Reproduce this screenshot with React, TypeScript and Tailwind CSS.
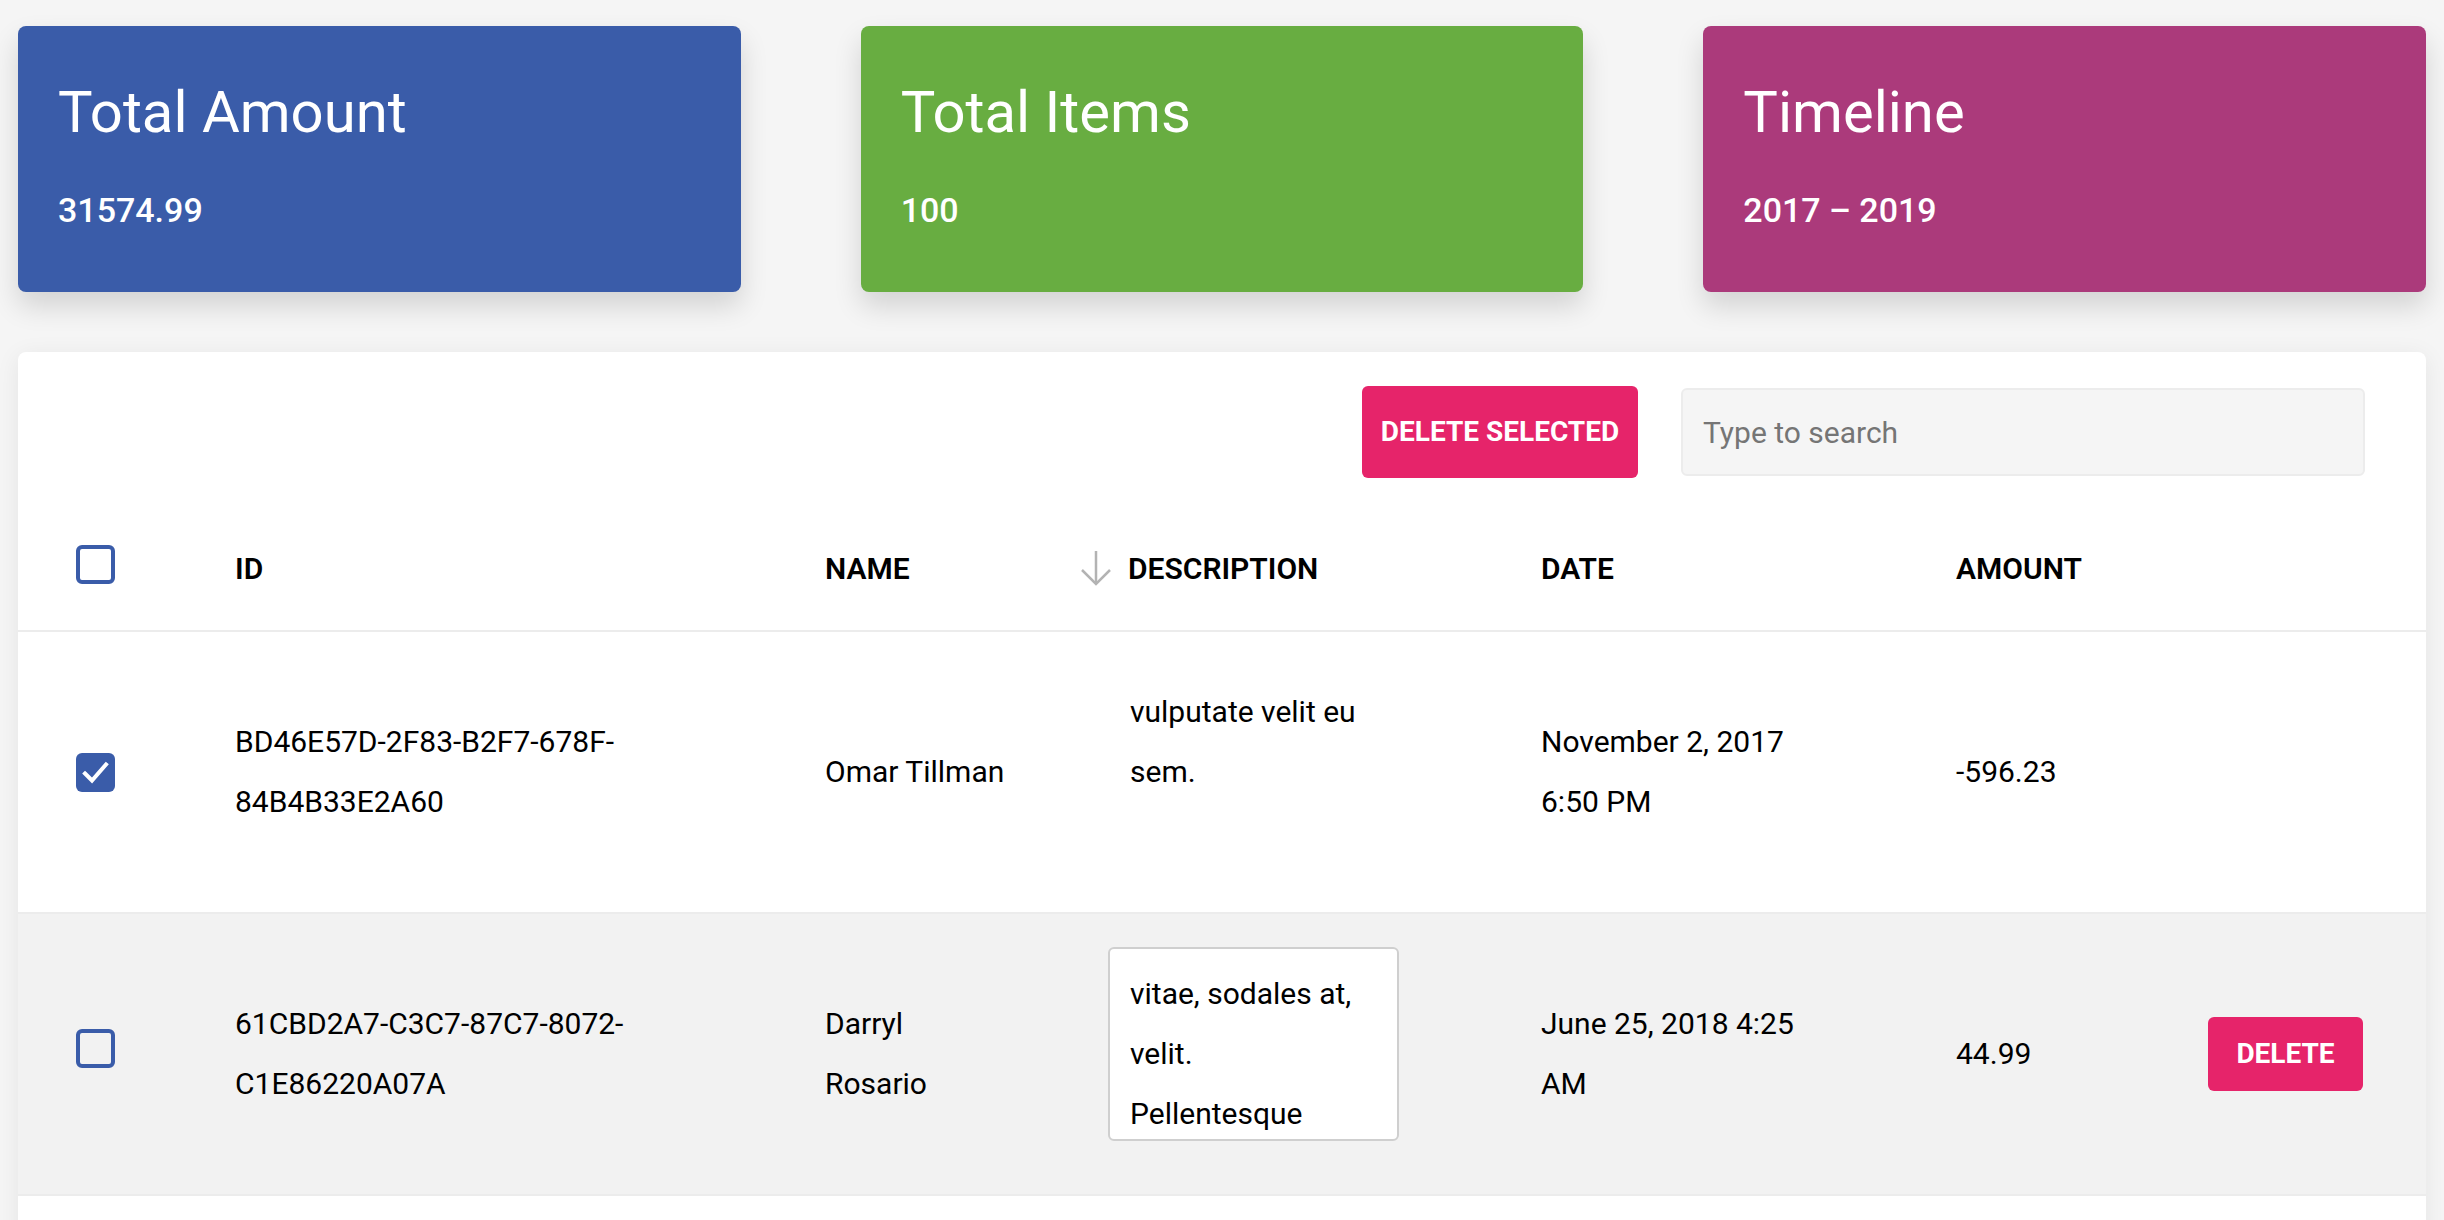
import { useState } from 'react';

interface Row {
  id: string[];
  name: string;
  description: string;
  date: string;
  amount: string;
}

const STATS = [
  { title: 'Total Amount', value: '31574.99', bg: 'bg-[#3a5ca9]' },
  { title: 'Total Items', value: '100', bg: 'bg-[#68ad41]' },
  { title: 'Timeline', value: '2017 – 2019', bg: 'bg-[#ab3a7b]' },
];

const ROWS: Row[] = [
  {
    id: ['BD46E57D-2F83-B2F7-678F-', '84B4B33E2A60'],
    name: 'Omar Tillman',
    description: 'vulputate velit eu sem.',
    date: 'November 2, 2017 6:50 PM',
    amount: '-596.23',
  },
  {
    id: ['61CBD2A7-C3C7-87C7-8072-', 'C1E86220A07A'],
    name: 'Darryl Rosario',
    description: 'vitae, sodales at, velit. Pellentesque ultricies dignissim lacus.',
    date: 'June 25, 2018 4:25 AM',
    amount: '44.99',
  },
];

const COLS = 'grid grid-cols-[159px_590px_283px_433px_415px_252px_155px] pl-[58px] pr-[63px]';

function Checkbox({ checked, onChange }: { checked: boolean; onChange: () => void }) {
  return (
    <button
      onClick={onChange}
      className={
        checked
          ? 'w-[39px] h-[39px] rounded-[6px] bg-[#3a5ca9] flex items-center justify-center'
          : 'w-[39px] h-[39px] rounded-[6px] border-[4px] border-[#3a5ca9] bg-transparent'
      }
    >
      {checked && (
        <svg width="39" height="39" viewBox="0 0 39 39" fill="none">
          <path d="M9 20.5 L16 27.5 L30 11.5" stroke="#fff" strokeWidth="4" strokeLinecap="square" />
        </svg>
      )}
    </button>
  );
}

function SortArrow() {
  return (
    <svg width="32" height="36" viewBox="0 0 32 36" fill="none">
      <path d="M16 1 V34" stroke="#b3b3b3" strokeWidth="2.5" />
      <path d="M2 20 L16 34 L30 20" stroke="#b3b3b3" strokeWidth="2.5" />
    </svg>
  );
}

export default function App() {
  const [selected, setSelected] = useState<Record<number, boolean>>({ 0: true });
  const [hovered, setHovered] = useState<number | null>(1);

  return (
    <div className="min-h-screen bg-[#f5f5f5] px-[18px] pt-[26px] pb-10 [font-family:Roboto,sans-serif] text-black">
      <div className="grid grid-cols-3 gap-[120px]">
        {STATS.map(s => (
          <div
            key={s.title}
            className={`${s.bg} h-[266px] rounded-lg px-[40px] pt-[57px] text-white shadow-[0_14px_28px_rgba(0,0,0,0.14)]`}
          >
            <h2 className="text-[58px] leading-none font-normal">{s.title}</h2>
            <p className="mt-[52px] text-[34px] leading-none font-medium">{s.value}</p>
          </div>
        ))}
      </div>

      <div className="mt-[60px] bg-white rounded-lg shadow-[0_4px_24px_rgba(0,0,0,0.07)] pt-[34px] pb-[120px]">
        <div className="flex justify-end items-center gap-[43px] pr-[61px]">
          <button className="h-[92px] w-[276px] rounded-[6px] bg-[#e6246a] text-white text-[28px] font-bold uppercase">
            Delete selected
          </button>
          <input
            placeholder="Type to search"
            className="h-[88px] w-[684px] rounded-[6px] bg-[#f5f5f5] border-2 border-[#ececec] px-[20px] text-[30px] placeholder:text-[#757575] outline-none"
          />
        </div>

        <div className={`${COLS} mt-[28px] h-[126px] items-center border-b-2 border-[#ececec] text-[30px] font-semibold uppercase`}>
          <div>
            <Checkbox checked={false} onChange={() => {}} />
          </div>
          <div>ID</div>
          <div>Name</div>
          <div className="flex items-center gap-[16px] -ml-[28px]">
            <SortArrow />
            <span>Description</span>
          </div>
          <div>Date</div>
          <div>Amount</div>
          <div />
        </div>

        {ROWS.map((r, i) => {
          const isHover = hovered === i;
          return (
            <div
              key={r.id[0]}
              onMouseEnter={() => setHovered(i)}
              className={`${COLS} h-[282px] items-center border-b-2 border-[#ececec] text-[30px] leading-[60px] ${isHover ? 'bg-[#f2f2f2]' : 'bg-white'}`}
            >
              <div>
                <Checkbox
                  checked={!!selected[i]}
                  onChange={() => setSelected(prev => ({ ...prev, [i]: !prev[i] }))}
                />
              </div>
              <div>
                {r.id[0]}
                <br />
                {r.id[1]}
              </div>
              <div className="max-w-[184px]">{r.name}</div>
              <div className="self-start mt-[33px]">
                <div
                  className={`w-[291px] h-[194px] overflow-hidden rounded-[6px] border-2 pl-[20px] pr-[38px] pt-[15px] ${isHover ? 'bg-white border-[#cfcfcf]' : 'border-transparent'}`}
                >
                  {r.description}
                </div>
              </div>
              <div className="max-w-[280px]">{r.date}</div>
              <div>{r.amount}</div>
              <div>
                {isHover && (
                  <button className="h-[74px] w-[155px] rounded-[6px] bg-[#e6246a] text-white text-[28px] font-bold uppercase leading-none">
                    Delete
                  </button>
                )}
              </div>
            </div>
          );
        })}
      </div>
    </div>
  );
}
